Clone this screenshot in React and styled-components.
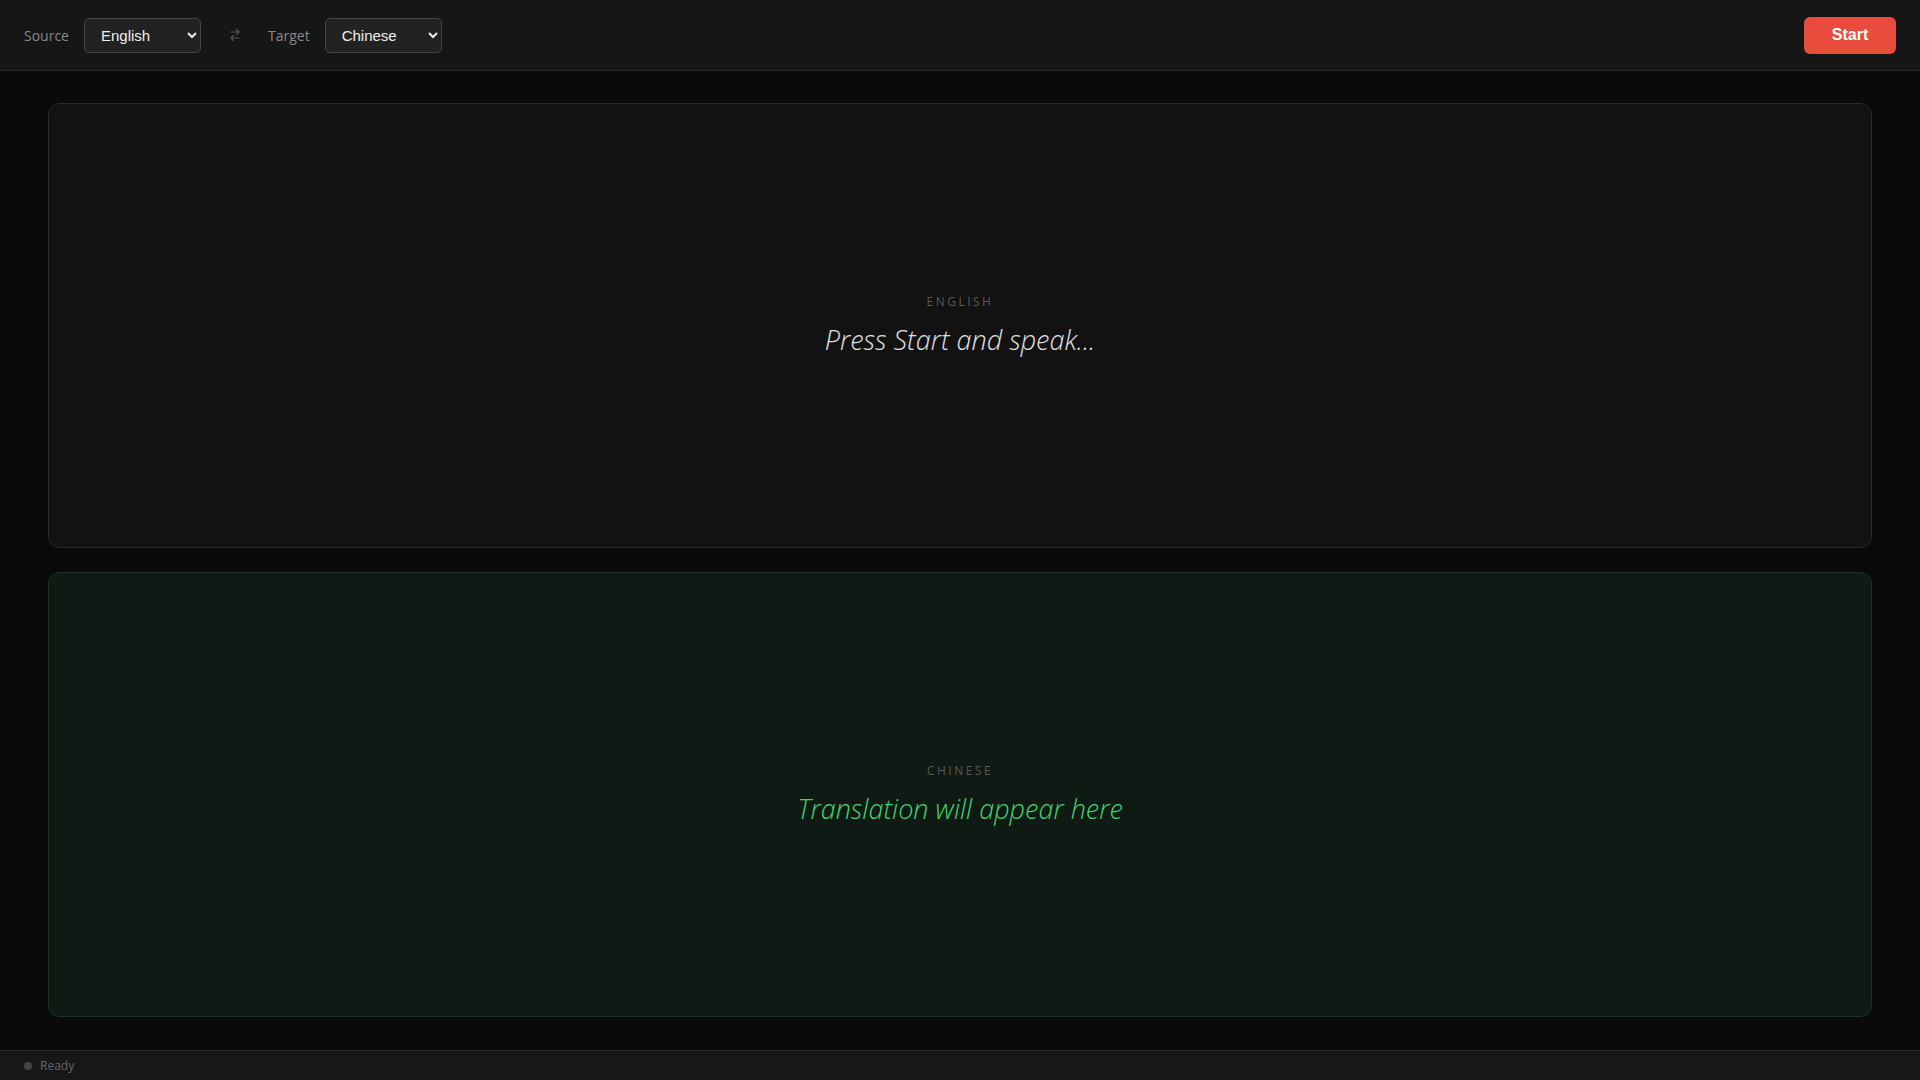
import React from 'react';
import styled, { createGlobalStyle } from 'styled-components';

const GlobalStyle = createGlobalStyle`
  html, body, #root {
    margin: 0;
    height: 100%;
  }
  body {
    background: #0a0a0a;
    font-family: 'Open Sans', 'Noto Sans', sans-serif;
    color: #ddd;
  }
`;

const Page = styled.div`
  display: flex;
  flex-direction: column;
  height: 100vh;
`;

const Toolbar = styled.header`
  display: flex;
  align-items: center;
  height: 71px;
  padding: 0 24px;
  background: #161616;
  border-bottom: 1px solid #2a2a2a;
  box-sizing: border-box;
`;

const Label = styled.span`
  font-size: 14px;
  color: #888;
  margin-right: 15px;
`;

const Select = styled.select`
  width: 117px;
  height: 35px;
  padding: 0 12px;
  background: #222;
  color: #eee;
  border: 1px solid #444;
  border-radius: 5px;
  font-family: 'Liberation Sans', Arial, sans-serif;
  font-size: 15px;
  color-scheme: dark;
`;

const Swap = styled.span`
  display: flex;
  align-items: center;
  color: #555;
  margin: 0 28px 0 29px;
`;

const Spacer = styled.div`
  flex: 1;
`;

const StartButton = styled.button`
  width: 92px;
  height: 37px;
  border: none;
  border-radius: 6px;
  background: #e74c3c;
  color: #fff;
  font-family: 'Liberation Sans', Arial, sans-serif;
  font-size: 16px;
  font-weight: 700;
  cursor: pointer;
`;

const Main = styled.main`
  flex: 1;
  display: flex;
  flex-direction: column;
  gap: 24px;
  padding: 32px 48px 33px;
  min-height: 0;
`;

const Panel = styled.section`
  flex: 1;
  display: flex;
  flex-direction: column;
  align-items: center;
  justify-content: center;
  gap: 11px;
  border-radius: 12px;
  background: ${({ $accent }) => ($accent ? '#0e1a13' : '#121212')};
  border: 1px solid ${({ $accent }) => ($accent ? '#1c3623' : '#2a2a2a')};
`;

const PanelTitle = styled.div`
  font-size: 12px;
  letter-spacing: 2.5px;
  color: #595959;
  text-transform: uppercase;
`;

const PanelText = styled.div`
  font-size: 27px;
  font-style: italic;
  font-weight: 300;
  color: ${({ $accent }) => ($accent ? '#40d472' : '#e0e0e0')};
`;

const StatusBar = styled.footer`
  display: flex;
  align-items: center;
  gap: 8px;
  height: 30px;
  padding: 0 24px;
  background: #171717;
  border-top: 1px solid #2a2a2a;
  box-sizing: border-box;
`;

const Dot = styled.span`
  width: 8px;
  height: 8px;
  border-radius: 50%;
  background: #444;
`;

const StatusText = styled.span`
  font-size: 12px;
  color: #666;
`;

const SwapIcon = () => (
  <svg width="10" height="14" viewBox="0 0 10 14" fill="none" stroke="currentColor" strokeWidth="1.2" strokeLinecap="round" strokeLinejoin="round">
    <path d="M1 4h8M6.5 1.5L9 4 6.5 6.5" />
    <path d="M9 10H1M3.5 7.5L1 10l2.5 2.5" />
  </svg>
);

const App = () => {
  return (
    <Page>
      <GlobalStyle />
      <Toolbar>
        <Label>Source</Label>
        <Select defaultValue="en">
          <option value="en">English</option>
          <option value="zh">Chinese</option>
        </Select>
        <Swap>
          <SwapIcon />
        </Swap>
        <Label>Target</Label>
        <Select defaultValue="zh">
          <option value="en">English</option>
          <option value="zh">Chinese</option>
        </Select>
        <Spacer />
        <StartButton>Start</StartButton>
      </Toolbar>
      <Main>
        <Panel>
          <PanelTitle>English</PanelTitle>
          <PanelText>Press Start and speak...</PanelText>
        </Panel>
        <Panel $accent>
          <PanelTitle>Chinese</PanelTitle>
          <PanelText $accent>Translation will appear here</PanelText>
        </Panel>
      </Main>
      <StatusBar>
        <Dot />
        <StatusText>Ready</StatusText>
      </StatusBar>
    </Page>
  );
};

export default App;
